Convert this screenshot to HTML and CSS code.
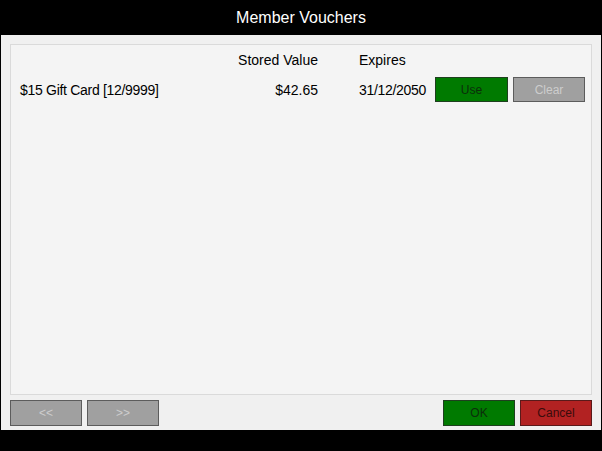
FILE: index.html
```html
<!DOCTYPE html>
<html>
<head>
<meta charset="utf-8">
<link rel="stylesheet" href="styles.css">
</head>
<body>
<div class="window">
  <div class="title">Member Vouchers</div>
  <div class="body">
    <div class="panel">
      <div class="grid">
        <div class="cell"></div>
        <div class="cell value head">Stored Value</div>
        <div class="cell exp head">Expires</div>
        <div class="cell"></div>
        <div class="cell"></div>

        <div class="cell row tight">$15 Gift Card [12/9999]</div>
        <div class="cell row value">$42.65</div>
        <div class="cell row exp tight">31/12/2050</div>
        <div class="cell row"><button class="btn green use">Use</button></div>
        <div class="cell row"><button class="btn grey">Clear</button></div>
      </div>
    </div>
    <div class="footer">
      <div class="group">
        <button class="btn grey wide">&lt;&lt;</button>
        <button class="btn grey wide">&gt;&gt;</button>
      </div>
      <div class="group">
        <button class="btn green wide">OK</button>
        <button class="btn red wide">Cancel</button>
      </div>
    </div>
  </div>
</div>
</body>
</html>
```
FILE: styles.css
```css
* { box-sizing: border-box; }
html, body { margin: 0; padding: 0; background: #000; }
body { font-family: "Liberation Sans", Arial, sans-serif; }
.window {
  width: 602px;
  height: 451px;
  background: #000;
  display: flex;
  flex-direction: column;
}
.title {
  height: 35px;
  color: #fff;
  font-size: 16px;
  display: flex;
  align-items: center;
  justify-content: center;
}
.body {
  margin: 0 1px;
  height: 395px;
  background: #f0f0f0;
  padding: 9px 9px 0 9px;
  display: flex;
  flex-direction: column;
}
.panel {
  height: 351px;
  background: #f4f4f4;
  border: 1px solid #dadada;
  padding: 7px 6px 0 9px;
}
.grid {
  display: grid;
  grid-template-columns: 1fr 100px 117px 78px 72px;
  font-size: 14px;
  color: #000;
}
.cell { line-height: 16px; }
.head { margin-bottom: 9px; }
.value { text-align: right; }
.exp { padding-left: 41px; }
.tight { letter-spacing: -0.3px; }
.row { height: 25px; display: flex; align-items: center; }
.row.value { justify-content: flex-end; }
.btn {
  font-family: "Liberation Sans", Arial, sans-serif;
  font-size: 12px;
  height: 25px;
  width: 72px;
  padding: 0;
  border: 1px solid #5a5a5a;
  border-radius: 0;
  display: flex;
  align-items: center;
  justify-content: center;
}
.use { width: 73px; }
.green { background: #007a00; border-color: #1f3f1f; color: #0b2e0b; }
.grey { background: #a0a0a0; border-color: #5c5c5c; color: #cdcdcd; }
.red { background: #b22222; border-color: #5a1a1a; color: #3a0c0c; }
.footer {
  display: flex;
  justify-content: space-between;
  margin-top: 5px;
}
.group { display: flex; gap: 5px; }
.wide { width: 72px; height: 26px; }
```
